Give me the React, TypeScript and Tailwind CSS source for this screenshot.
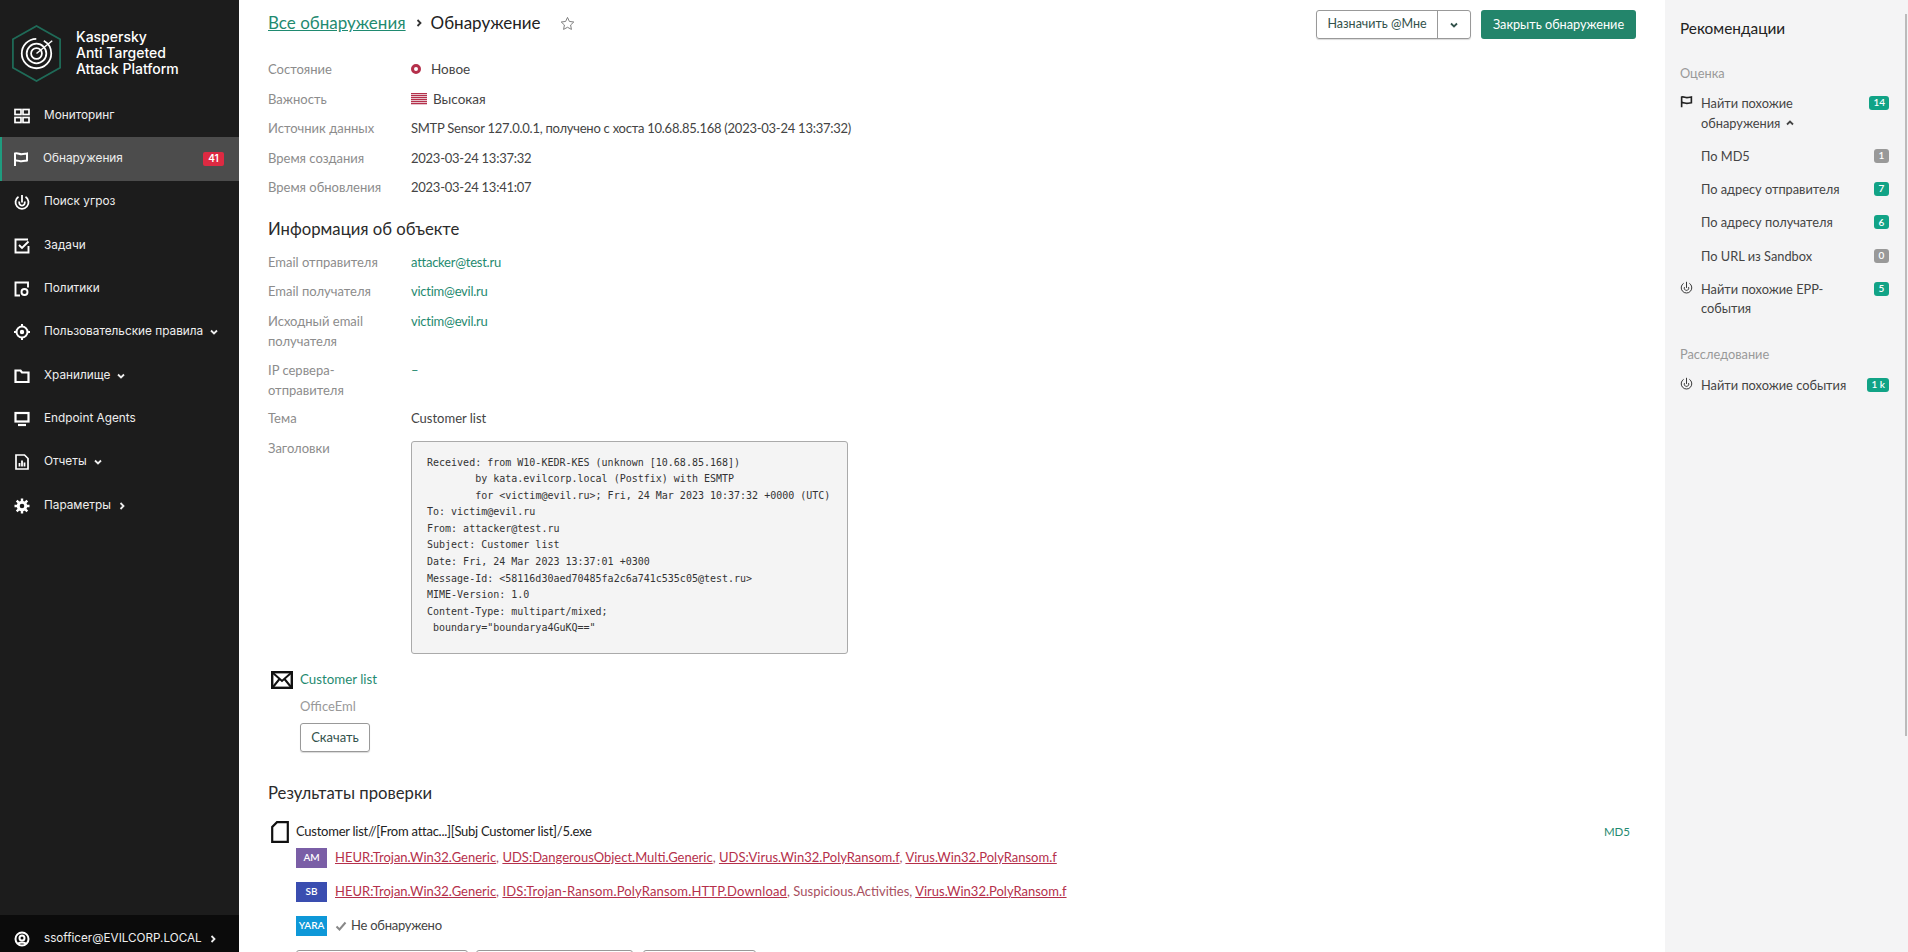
import type { ReactNode } from 'react'

const navIconClass = 'w-[16px] h-[16px] shrink-0 text-white'

function Chevron({ dir = 'down', className = '' }: { dir?: 'down' | 'right' | 'up'; className?: string }) {
  const d = dir === 'down' ? 'M2 3.5l3 3 3-3' : dir === 'up' ? 'M2 6.5l3-3 3 3' : 'M3.5 2l3 3-3 3'
  return (
    <svg viewBox="0 0 10 10" className={`w-[10px] h-[10px] shrink-0 ${className}`} fill="none" stroke="currentColor" strokeWidth="1.8">
      <path d={d} />
    </svg>
  )
}

function FlagIcon({ className = '' }: { className?: string }) {
  return (
    <svg viewBox="0 0 16 16" className={className} fill="none" stroke="currentColor" strokeWidth="2">
      <path d="M2 15V2.500c3-.8 4 .8 6.500.8 2 0 3.500-.5 5.500-.8v7c-2 .3-3.500.8-5.500.8-2.500 0-3.500-1.300-6.500-.8" />
    </svg>
  )
}

function HuntIcon({ className = '' }: { className?: string }) {
  return (
    <svg viewBox="0 0 16 16" className={className} fill="none" stroke="currentColor" strokeWidth="1.800">
      <path d="M4.500 2.800a6.500 6.500 0 1 0 7 0" />
      <path d="M8 1v7.500" />
      <path d="M5.500 7.500a2.800 2.800 0 1 0 5 0" />
    </svg>
  )
}

const navIcons: Record<string, ReactNode> = {
  monitor: (
    <svg viewBox="0 0 16 16" className={navIconClass} fill="none" stroke="currentColor" strokeWidth="1.700">
      <rect x="1" y="1.500" width="6" height="5" />
      <rect x="9" y="1.500" width="6" height="5" />
      <rect x="1" y="9.500" width="6" height="5" />
      <rect x="9" y="9.500" width="6" height="5" />
    </svg>
  ),
  flag: <FlagIcon className={navIconClass} />,
  hunt: <HuntIcon className={navIconClass} />,
  tasks: (
    <svg viewBox="0 0 16 16" className={navIconClass} fill="none" stroke="currentColor" strokeWidth="1.900">
      <path d="M14 1.500H1.500v13h13V8" />
      <path d="M5 7l3 3 6.500-6.500" />
    </svg>
  ),
  policy: (
    <svg viewBox="0 0 16 16" className={navIconClass} fill="none" stroke="currentColor" strokeWidth="1.900">
      <path d="M6 14.500H1.500v-13h12.500v5" />
      <circle cx="10.500" cy="11" r="3" />
    </svg>
  ),
  rules: (
    <svg viewBox="0 0 16 16" className={navIconClass} fill="none" stroke="currentColor" strokeWidth="2">
      <circle cx="8" cy="8" r="5.500" />
      <circle cx="8" cy="8" r="1.200" fill="currentColor" />
      <path d="M8 0v2M8 14v2M0 8h2M14 8h2" />
    </svg>
  ),
  storage: (
    <svg viewBox="0 0 16 16" className={navIconClass} fill="none" stroke="currentColor" strokeWidth="2.200">
      <path d="M1.500 2.500h5l1.500 2h6.500v9.500H1.500z" />
    </svg>
  ),
  agents: (
    <svg viewBox="0 0 16 16" className={navIconClass} fill="none" stroke="currentColor" strokeWidth="2.200">
      <rect x="1.500" y="2" width="13" height="8.500" />
      <path d="M4 14h8" />
    </svg>
  ),
  reports: (
    <svg viewBox="0 0 16 16" className={navIconClass} fill="none" stroke="currentColor" strokeWidth="1.700">
      <path d="M2 1h8.500L14 4.500V15H2z" />
      <path d="M5.500 12.500V9M8 12.500V6.500M10.500 12.500V8.500" strokeWidth="1.800" />
    </svg>
  ),
  settings: (
    <svg viewBox="0 0 16 16" className={navIconClass} fill="none" stroke="currentColor">
      <circle cx="8" cy="8" r="3.800" strokeWidth="3" />
      <path d="M8 .5v3M8 12.500v3M.5 8h3M12.500 8h3M2.700 2.700l2 2M11.300 11.300l2 2M13.300 2.700l-2 2M4.700 11.300l-2 2" strokeWidth="2.400" />
    </svg>
  ),
}

const navItems = [
  { key: 'monitor', label: 'Мониторинг' },
  { key: 'flag', label: 'Обнаружения', badge: '41', active: true },
  { key: 'hunt', label: 'Поиск угроз' },
  { key: 'tasks', label: 'Задачи' },
  { key: 'policy', label: 'Политики' },
  { key: 'rules', label: 'Пользовательские правила', chevron: 'down' as const },
  { key: 'storage', label: 'Хранилище', chevron: 'down' as const },
  { key: 'agents', label: 'Endpoint Agents' },
  { key: 'reports', label: 'Отчеты', chevron: 'down' as const },
  { key: 'settings', label: 'Параметры', chevron: 'right' as const },
]

function Sidebar() {
  return (
    <aside className="w-[239px] shrink-0 bg-[#1c1c1c] flex flex-col text-[#eeeeee] font-['Inter',sans-serif]">
      <div className="h-[94px] flex items-center pl-[11px] pt-[12px] gap-[14px]">
        <svg viewBox="0 0 50 58" className="w-[51px] h-[57px] shrink-0" fill="none">
          <path d="M25 1l24 13.500v29L25 57 1 43.500v-29z" stroke="#1f6b58" strokeWidth="1.800" />
          <g stroke="#ffffff">
            <circle cx="25" cy="29" r="15" strokeWidth="1.800" strokeDasharray="70 8" />
            <circle cx="25" cy="29" r="10" strokeWidth="1.800" />
            <circle cx="25" cy="29" r="5.500" strokeWidth="1.800" />
            <path d="M25 29L41 16" strokeWidth="1.500" />
          </g>
        </svg>
        <div className="text-[14px] leading-[16px] font-medium text-white">
          <div>Kaspersky</div>
          <div>Anti Targeted</div>
          <div>Attack Platform</div>
        </div>
      </div>
      <nav className="flex-1">
        {navItems.map(item => (
          <div
            key={item.key}
            className={`h-[43.33px] flex items-center pr-[15px] text-[11.800px] ${item.active ? 'bg-[#4c4c4c] border-l-[2px] border-[#1f9c7f] pl-[11px]' : 'pl-[14px]'}`}
          >
            {navIcons[item.key]}
            <span className="ml-[14px]">{item.label}</span>
            {item.chevron && <Chevron dir={item.chevron} className="ml-[6px]" />}
            {item.badge && (
              <span className="ml-auto bg-[#dd2a42] text-white text-[10px] font-semibold rounded-[2px] w-[21px] h-[14px] flex items-center justify-center">
                {item.badge}
              </span>
            )}
          </div>
        ))}
      </nav>
      <div className="h-[37px] bg-[#0b0b0b] flex items-center pl-[14px] pt-[11px] text-[11.700px]">
        <svg viewBox="0 0 16 16" className={navIconClass} fill="none" stroke="currentColor" strokeWidth="2">
          <circle cx="8" cy="8" r="6.500" />
          <circle cx="8" cy="7" r="2.500" />
          <path d="M4 13c1-2 7-2 8 0" />
        </svg>
        <span className="ml-[14px]">ssofficer@EVILCORP.LOCAL</span>
        <Chevron dir="right" className="ml-[6px]" />
      </div>
    </aside>
  )
}

function Row({ label, children, className = '' }: { label: ReactNode; children: ReactNode; className?: string }) {
  return (
    <div className={`grid grid-cols-[143px_1fr] pb-[9.500px] ${className}`}>
      <div className="text-[#8c8c8c] leading-[20px]">{label}</div>
      <div className="text-[#444444] leading-[20px]">{children}</div>
    </div>
  )
}

const teal = 'text-[#1f8a70]'
const tight = 'tracking-[-0.25px]'

function Threat({ children, className = '' }: { children: string; className?: string }) {
  return <span className={`underline text-[#b5304b] ${className}`}>{children}</span>
}

function ScanRow({ tag, color, children }: { tag: string; color: string; children: ReactNode }) {
  return (
    <div className="flex items-center h-[20px] mb-[14px]">
      <span className={`w-[31px] h-[20px] mr-[8px] flex items-center justify-center text-white text-[10px] font-semibold ${color}`}>{tag}</span>
      <div className="text-[#a8505f]">{children}</div>
    </div>
  )
}

const headers = `Received: from W10-KEDR-KES (unknown [10.68.85.168])
	by kata.evilcorp.local (Postfix) with ESMTP
	for <victim@evil.ru>; Fri, 24 Mar 2023 10:37:32 +0000 (UTC)
To: victim@evil.ru
From: attacker@test.ru
Subject: Customer list
Date: Fri, 24 Mar 2023 13:37:01 +0300
Message-Id: <58116d30aed70485fa2c6a741c535c05@test.ru>
MIME-Version: 1.0
Content-Type: multipart/mixed;
 boundary="boundarya4GuKQ=="`

function Main() {
  return (
    <main className="flex-1 min-w-0 overflow-hidden px-[29px] pt-[10px] text-[13px]">
      <header className="h-[29px] flex items-center mb-[20px]">
        <span className={`text-[17px] leading-[24px] -mt-[3px] underline ${teal}`}>Все обнаружения</span>
        <Chevron dir="right" className="ml-[8px] -mt-[3px] text-[#333333]" />
        <span className="text-[17px] leading-[24px] -mt-[3px] text-[#222222] ml-[7px]">Обнаружение</span>
        <svg viewBox="0 0 16 16" className="w-[15px] h-[15px] ml-[19px] -mt-[3px] text-[#777777]" fill="none" stroke="currentColor" strokeWidth="1">
          <path d="M8 1.500l2 4.300 4.700.6-3.400 3.200.9 4.700L8 12l-4.200 2.300.9-4.700L1.300 6.400 6 5.800z" />
        </svg>
        <div className="ml-auto flex h-[29px] border border-[#999999] rounded-[3px] shadow-[0_1px_1px_rgba(0,0,0,0.15)] text-[#33524b] text-[12.500px]">
          <span className="w-[121px] flex items-center justify-center border-r border-[#999999]">Назначить @Мне</span>
          <span className="w-[32px] flex items-center justify-center"><Chevron /></span>
        </div>
        <button className="ml-[10px] w-[155px] h-[29px] rounded-[3px] bg-[#23856b] text-white text-[12.700px]">Закрыть обнаружение</button>
      </header>

      <Row label="Состояние">
        <span className="flex items-center text-[13.500px]">
          <span className="w-[10px] h-[10px] rounded-full border-[3px] border-[#b5304b] mr-[10px]" />
          Новое
        </span>
      </Row>
      <Row label="Важность">
        <span className="flex items-center text-[13.500px]">
          <span className="w-[16px] h-[12px] mr-[6px] bg-[repeating-linear-gradient(to_bottom,#b5304b_0,#b5304b_1px,#e6c3cb_1px,#e6c3cb_2px)]" />
          Высокая
        </span>
      </Row>
      <Row label="Источник данных"><span className={tight}>SMTP Sensor 127.0.0.1, получено с хоста 10.68.85.168 (2023-03-24 13:37:32)</span></Row>
      <Row label="Время создания"><span className={tight}>2023-03-24 13:37:32</span></Row>
      <Row label="Время обновления"><span className={tight}>2023-03-24 13:41:07</span></Row>

      <h2 className="text-[16.700px] leading-[24px] text-[#2b2b2b] mt-[10px] mb-[11px]">Информация об объекте</h2>
      <Row label="Email отправителя"><span className={`${teal} ${tight}`}>attacker@test.ru</span></Row>
      <Row label="Email получателя"><span className={`${teal} ${tight}`}>victim@evil.ru</span></Row>
      <Row label={<>Исходный email<br />получателя</>}><span className={`${teal} ${tight}`}>victim@evil.ru</span></Row>
      <Row label={<>IP сервера-<br />отправителя</>}><span className={teal}>–</span></Row>
      <Row label="Тема" className="-mt-[1.500px]">Customer list</Row>
      <Row label="Заголовки">
        <pre className="mt-[3px] w-[437px] h-[213px] bg-[#f4f4f4] border border-[#aaaaaa] rounded-[3px] pt-[13px] pl-[15px] font-['DejaVu_Sans_Mono',monospace] text-[10px] leading-[16.600px] text-[#333333] [tab-size:8]">
          {headers}
        </pre>
      </Row>

      <div className="mt-[5px] pl-[3px] flex items-center h-[24px]">
        <svg viewBox="0 0 22 18" className="w-[22px] h-[18px] shrink-0" fill="none" stroke="#111111">
          <rect x="1.200" y="1.200" width="19.600" height="15.600" strokeWidth="2.400" />
          <path d="M2 2l9 8 9-8M2 16l6.500-8M20 16l-6.500-8" strokeWidth="2" />
        </svg>
        <span className={`ml-[7px] text-[13.300px] ${teal}`}>Customer list</span>
      </div>
      <div className="pl-[32px] mt-[2px] leading-[24px] text-[#999999]">OfficeEml</div>
      <button className="ml-[32px] mt-[5px] w-[70px] h-[29px] border border-[#999999] rounded-[3px] shadow-[0_1px_1px_rgba(0,0,0,0.15)] text-[#33524b] text-[13px] block">Скачать</button>

      <h2 className="text-[16.700px] leading-[24px] text-[#2b2b2b] mt-[28.500px] mb-[16px]">Результаты проверки</h2>
      <div className="flex items-center h-[22px] pl-[3px] mb-[5px]">
        <svg viewBox="0 0 18 22" className="w-[18px] h-[22px] shrink-0" fill="none" stroke="#111111" strokeWidth="2.200">
          <path d="M6 1.200h10.800v19.600H1.200V6z" />
        </svg>
        <span className={`ml-[7px] text-[#222222] ${tight}`}>Customer list//[From attac...][Subj Customer list]/5.exe</span>
        <span className={`ml-auto mr-[6px] text-[11.500px] ${teal}`}>MD5</span>
      </div>
      <div className="pl-[28px]">
        <ScanRow tag="AM" color="bg-[#7a5ea6]">
          <Threat>HEUR:Trojan.Win32.Generic</Threat>, <Threat>UDS:DangerousObject.Multi.Generic</Threat>, <Threat>UDS:Virus.Win32.PolyRansom.f</Threat>, <Threat>Virus.Win32.PolyRansom.f</Threat>
        </ScanRow>
        <ScanRow tag="SB" color="bg-[#3a4db0]">
          <Threat>HEUR:Trojan.Win32.Generic</Threat>, <Threat className="tracking-[0.16px]">IDS:Trojan-Ransom.PolyRansom.HTTP.Download</Threat>, Suspicious.Activities, <Threat>Virus.Win32.PolyRansom.f</Threat>
        </ScanRow>
        <ScanRow tag="YARA" color="bg-[#0e98d8]">
          <span className={`flex items-center text-[#444444] ${tight}`}>
            <svg viewBox="0 0 12 12" className="w-[12px] h-[12px] mr-[4px] text-[#888888]" fill="none" stroke="currentColor" strokeWidth="2">
              <path d="M1.500 6.500l3 3 6-7" />
            </svg>
            Не обнаружено
          </span>
        </ScanRow>
        <div className="flex">
          <div className="w-[172px] h-[29px] border border-[#999999] rounded-[3px]" />
          <div className="ml-[8px] w-[157px] h-[29px] border border-[#999999] rounded-[3px]" />
          <div className="ml-[10px] w-[113px] h-[29px] border border-[#999999] rounded-[3px]" />
        </div>
      </div>
    </main>
  )
}

function Rec({ icon, children, count, gray }: { icon?: ReactNode; children: ReactNode; count: string; gray?: boolean }) {
  return (
    <div className="flex items-start leading-[19.500px] pb-[13.800px]">
      <div className="w-[21px] shrink-0 text-[#222222] pt-[1px]">{icon}</div>
      <div className="flex-1 text-[#444444]">{children}</div>
      <span className={`mt-[2px] ml-[8px] min-w-[15px] h-[14px] px-[4px] rounded-[3px] flex items-center justify-center text-white text-[10px] font-semibold shrink-0 ${gray ? 'bg-[#999999]' : 'bg-[#11a386]'}`}>
        {count}
      </span>
    </div>
  )
}

function RightPanel() {
  return (
    <aside className="w-[240px] shrink-0 bg-[#f4f4f5] pl-[15px] pr-[16px] pt-[16px] text-[12.800px]">
      <h2 className="text-[15.400px] leading-[24px] text-[#222222] mb-[23px]">Рекомендации</h2>
      <div className="text-[#999999] leading-[20px] mb-[11px]">Оценка</div>
      <Rec icon={<FlagIcon className="w-[13px] h-[13px]" />} count="14">
        Найти похожие<br />
        <span className="inline-flex items-center">обнаружения<Chevron dir="up" className="ml-[5px]" /></span>
      </Rec>
      <Rec count="1" gray>По MD5</Rec>
      <Rec count="7">По адресу отправителя</Rec>
      <Rec count="6">По адресу получателя</Rec>
      <Rec count="0" gray>По URL из Sandbox</Rec>
      <Rec icon={<HuntIcon className="w-[13px] h-[13px] [stroke-width:1.100]" />} count="5">Найти похожие EPP-<br />события</Rec>
      <div className="text-[#999999] leading-[20px] mt-[11px] mb-[12px]">Расследование</div>
      <Rec icon={<HuntIcon className="w-[13px] h-[13px] [stroke-width:1.100]" />} count="1 k">Найти похожие события</Rec>
    </aside>
  )
}

export default function App() {
  return (
    <div className="h-[952px] flex overflow-hidden bg-white font-['Lato',sans-serif]">
      <Sidebar />
      <Main />
      <RightPanel />
      <div className="w-[3px] shrink-0 bg-[#f4f4f5] pt-[14px]">
        <div className="w-[2px] h-[722px] bg-[#bbbbbb]" />
      </div>
    </div>
  )
}
